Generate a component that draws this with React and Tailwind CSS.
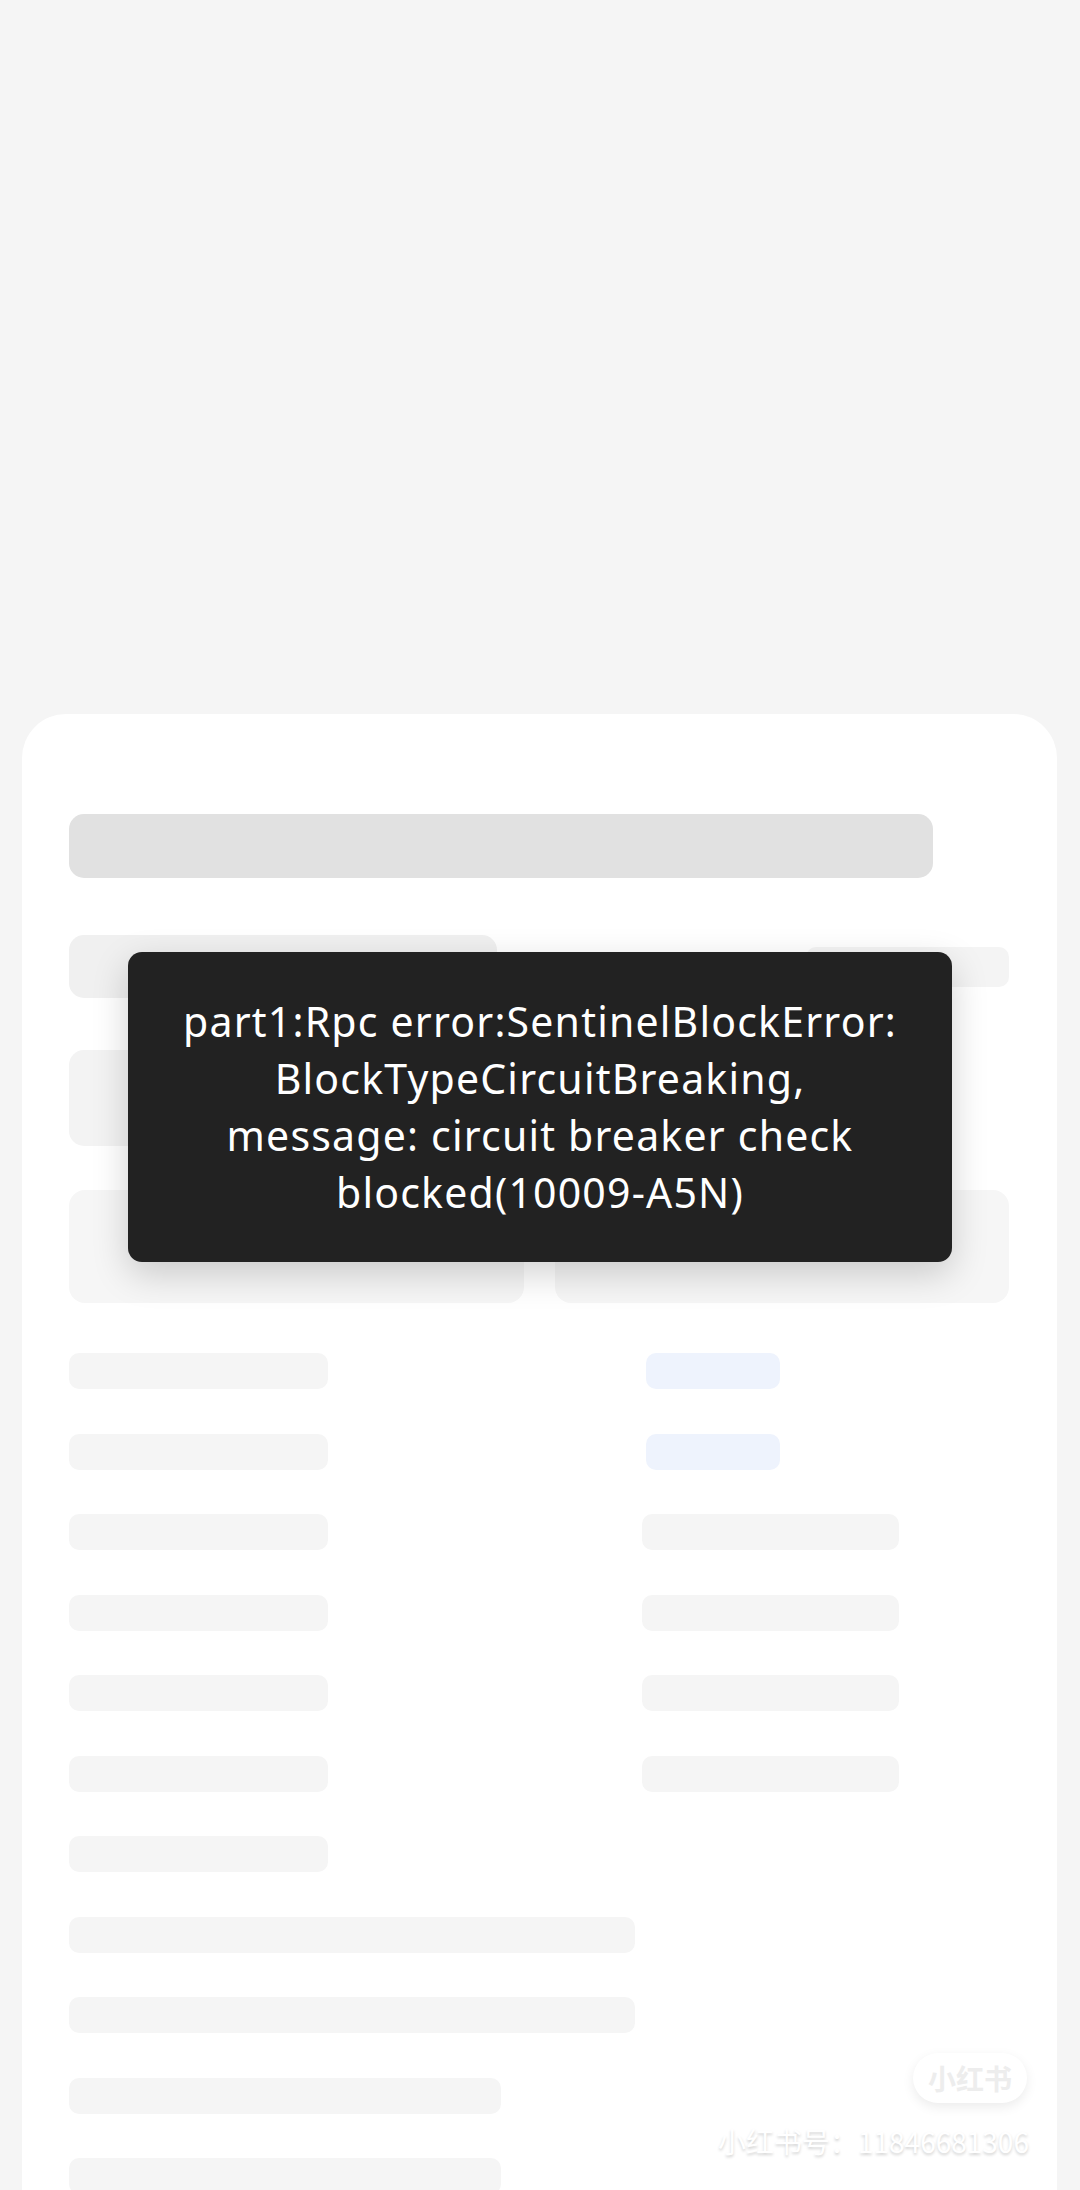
import React from 'react'

const Bar = ({ className }) => <div className={`rounded-[10px] ${className}`} />

const App = () => {
  const pairs = [
    { right: 'blue' },
    { right: 'blue' },
    { right: 'gray' },
    { right: 'gray' },
    { right: 'gray' },
    { right: 'gray' },
  ]

  return (
    <div className="relative min-h-[2190px] w-full overflow-hidden bg-[#f5f5f5] font-['Roboto','Noto_Sans_CJK_SC',sans-serif]">
      <div className="h-[714px]" />

      <div className="ml-[22px] w-[1035px] h-[1476px] rounded-t-[44px] bg-white pl-[47px] pr-[48px] pt-[100px]">
        <div className="h-[64px] w-[864px] rounded-[15px] bg-[#e1e1e1]" />

        <div className="mt-[57px] flex items-center justify-between">
          <div className="h-[63px] w-[428px] rounded-[15px] bg-[#f0f0f0]" />
          <div className="h-[40px] w-[203px] rounded-[10px] bg-[#f4f4f4]" />
        </div>

        <div className="mt-[52px] h-[96px] w-[428px] rounded-[15px] bg-[#f3f3f3]" />

        <div className="mt-[44px] grid grid-cols-2 gap-[31px]">
          <div className="h-[113px] rounded-[16px] bg-[#f6f6f6]" />
          <div className="h-[113px] rounded-[16px] bg-[#f6f6f6]" />
        </div>

        <div className="mt-[50px] flex flex-col gap-[44.5px]">
          {pairs.map((p, i) => (
            <div key={i} className="flex items-center">
              <Bar className="h-[36px] w-[259px] bg-[#f5f5f5]" />
              {p.right === 'blue'
                ? <Bar className="ml-[318px] h-[36px] w-[134px] bg-[#eef3fd]" />
                : <Bar className="ml-[314px] h-[36px] w-[257px] bg-[#f5f5f5]" />}
            </div>
          ))}
          <Bar className="h-[36px] w-[259px] bg-[#f5f5f5]" />
          <Bar className="h-[36px] w-[566px] bg-[#f5f5f5]" />
          <Bar className="h-[36px] w-[566px] bg-[#f5f5f5]" />
          <Bar className="h-[36px] w-[432px] bg-[#f5f5f5]" />
          <Bar className="h-[36px] w-[432px] bg-[#f5f5f5]" />
        </div>
      </div>

      {/* toast */}
      <div className="absolute left-[128px] top-[952px] flex h-[310px] w-[824px] items-center justify-center rounded-[14px] bg-[#222222] shadow-[0_12px_36px_rgba(0,0,0,0.18)]">
        <p className="text-center font-['Noto_Sans',sans-serif] text-[41px] leading-[57px] tracking-[1.2px] text-white">
          part1:Rpc error:SentinelBlockError:<br />
          BlockTypeCircuitBreaking,<br />
          message: circuit breaker check<br />
          blocked(10009-A5N)
        </p>
      </div>

      {/* watermark */}
      <div className="absolute left-[913px] top-[2053px] flex h-[50px] w-[114px] items-center justify-center rounded-full bg-white shadow-[0_4px_12px_rgba(0,0,0,0.08)]">
        <span className="text-[28px] font-bold text-[#ededed] font-['Noto_Sans_CJK_SC',sans-serif]">小红书</span>
      </div>
      <div className="absolute left-[718px] top-[2121px] text-[28px] leading-[40px] text-white font-['Noto_Sans_CJK_SC',sans-serif] [text-shadow:0_2px_3px_rgba(0,0,0,0.18)]">
        小红书号：11846681306
      </div>
    </div>
  )
}

export default App
